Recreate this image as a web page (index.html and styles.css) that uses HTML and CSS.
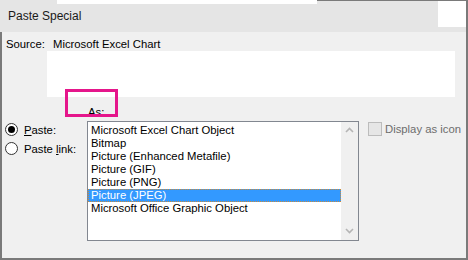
FILE: index.html
```html
<html>
  <head>
    <meta charset="utf-8">
    <link rel="stylesheet" href="styles.css">
  </head>
  <body>
    <div class="dialog">
      <div class="titlebar">
        <span class="title">Paste Special</span>
        <div class="close-box"></div>
      </div>
      <div class="content">
        <div class="source-row">
          <span class="source-label">Source:</span>
          <span>Microsoft Excel Chart</span>
        </div>
        <div class="source-box"></div>
        <div class="as-row">
          <span class="as-label">As:</span>
          <div class="callout"></div>
        </div>
        <div class="main">
          <div class="options">
            <div class="radio-row">
              <span class="radio checked"></span>
              <span><u>P</u>aste:</span>
            </div>
            <div class="radio-row">
              <span class="radio"></span>
              <span>Paste <u>l</u>ink:</span>
            </div>
          </div>
          <div class="listbox">
            <div class="items">
              <div class="item">Microsoft Excel Chart Object</div>
              <div class="item">Bitmap</div>
              <div class="item">Picture (Enhanced Metafile)</div>
              <div class="item">Picture (GIF)</div>
              <div class="item">Picture (PNG)</div>
              <div class="item selected">Picture (JPEG)</div>
              <div class="item">Microsoft Office Graphic Object</div>
            </div>
            <div class="scrollbar">
              <svg width="9" height="6" viewBox="0 0 9 6"><path d="M1 5 L4.5 1.5 L8 5" fill="none" stroke="#b5b5b5" stroke-width="1.6"/></svg>
              <svg width="9" height="6" viewBox="0 0 9 6"><path d="M1 1 L4.5 4.5 L8 1" fill="none" stroke="#b5b5b5" stroke-width="1.6"/></svg>
            </div>
          </div>
          <div class="side">
            <span class="checkbox"></span>
            <span class="disabled">Display as icon</span>
          </div>
        </div>
      </div>
    </div>
  </body>
</html>
```
FILE: styles.css
```css
body {
  margin: 0;
  width: 468px;
  height: 260px;
  overflow: hidden;
  background: #f0f0f0;
  font-family: "Liberation Sans", Arial, sans-serif;
  font-size: 11.3px;
  color: #000;
}
.dialog {
  width: 468px;
  height: 260px;
  display: flex;
  flex-direction: column;
}
.titlebar {
  height: 32px;
  display: flex;
  align-items: flex-start;
  border-right: 2px solid #7a7a7a;
  /* cropped edge of the window above */
  background:
    linear-gradient(#fff, #fff) 57px 0 / 260px 4px no-repeat,
    linear-gradient(#7a7a7a, #7a7a7a) 317px 0 / 151px 1px no-repeat,
    #e5e5e5;
}
.title {
  flex: 1;
  padding: 9px 0 0 8px;
  font-size: 12px;
  line-height: 14px;
  color: #1a1a1a;
}
.close-box {
  width: 28px;
  height: 26px;
  margin-top: 1px;
  background: #fff;
}
.content {
  flex: 1;
  border: 2px solid #7a7a7a;
  border-top: none;
  padding-top: 6px;
}
.source-row {
  display: flex;
  padding-left: 4px;
  line-height: 13px;
}
.source-label {
  width: 47px;
}
.source-box {
  height: 46px;
  margin: 0 11px 0 45px;
  background: #fff;
}
.as-row {
  height: 24px;
  padding-top: 8px;
  box-sizing: border-box;
  position: relative;
}
.as-label {
  display: block;
  margin-left: 86px;
  line-height: 14px;
}
.callout {
  position: absolute;
  left: 63px;
  top: -8px;
  width: 47px;
  height: 22px;
  border: 3px solid #e5168b;
}
.main {
  display: flex;
}
.options {
  width: 85px;
  flex-shrink: 0;
  padding-top: 2px;
}
.radio-row {
  display: flex;
  align-items: center;
  gap: 6px;
  height: 13px;
  margin-bottom: 6px;
  padding-left: 3px;
}
.radio {
  width: 11px;
  height: 11px;
  border: 1px solid #333;
  border-radius: 50%;
  background: #fff;
  display: flex;
  align-items: center;
  justify-content: center;
}
.radio.checked::after {
  content: "";
  width: 7px;
  height: 7px;
  border-radius: 50%;
  background: #000;
}
.listbox {
  width: 270px;
  height: 118px;
  flex-shrink: 0;
  border: 1px solid #828790;
  background: #fff;
  display: flex;
}
.items {
  flex: 1;
  padding-top: 2px;
}
.item {
  height: 13px;
  line-height: 13px;
  padding-left: 3px;
  white-space: nowrap;
}
.item.selected {
  background: #3399ff;
  color: #fff;
  outline: 1px dotted #c98a3a;
  outline-offset: -1px;
}
.scrollbar {
  width: 17px;
  background: #f0f0f0;
  display: flex;
  flex-direction: column;
  align-items: center;
  justify-content: space-between;
  padding: 5px 0 6px;
}
.side {
  display: flex;
  align-items: center;
  gap: 3px;
  margin-left: 9px;
  height: 15px;
  white-space: nowrap;
}
.checkbox {
  width: 12px;
  height: 12px;
  flex-shrink: 0;
  border: 1px solid #bcbcbc;
  background: #e6e6e6;
}
.disabled {
  color: #6d6d6d;
}
```
